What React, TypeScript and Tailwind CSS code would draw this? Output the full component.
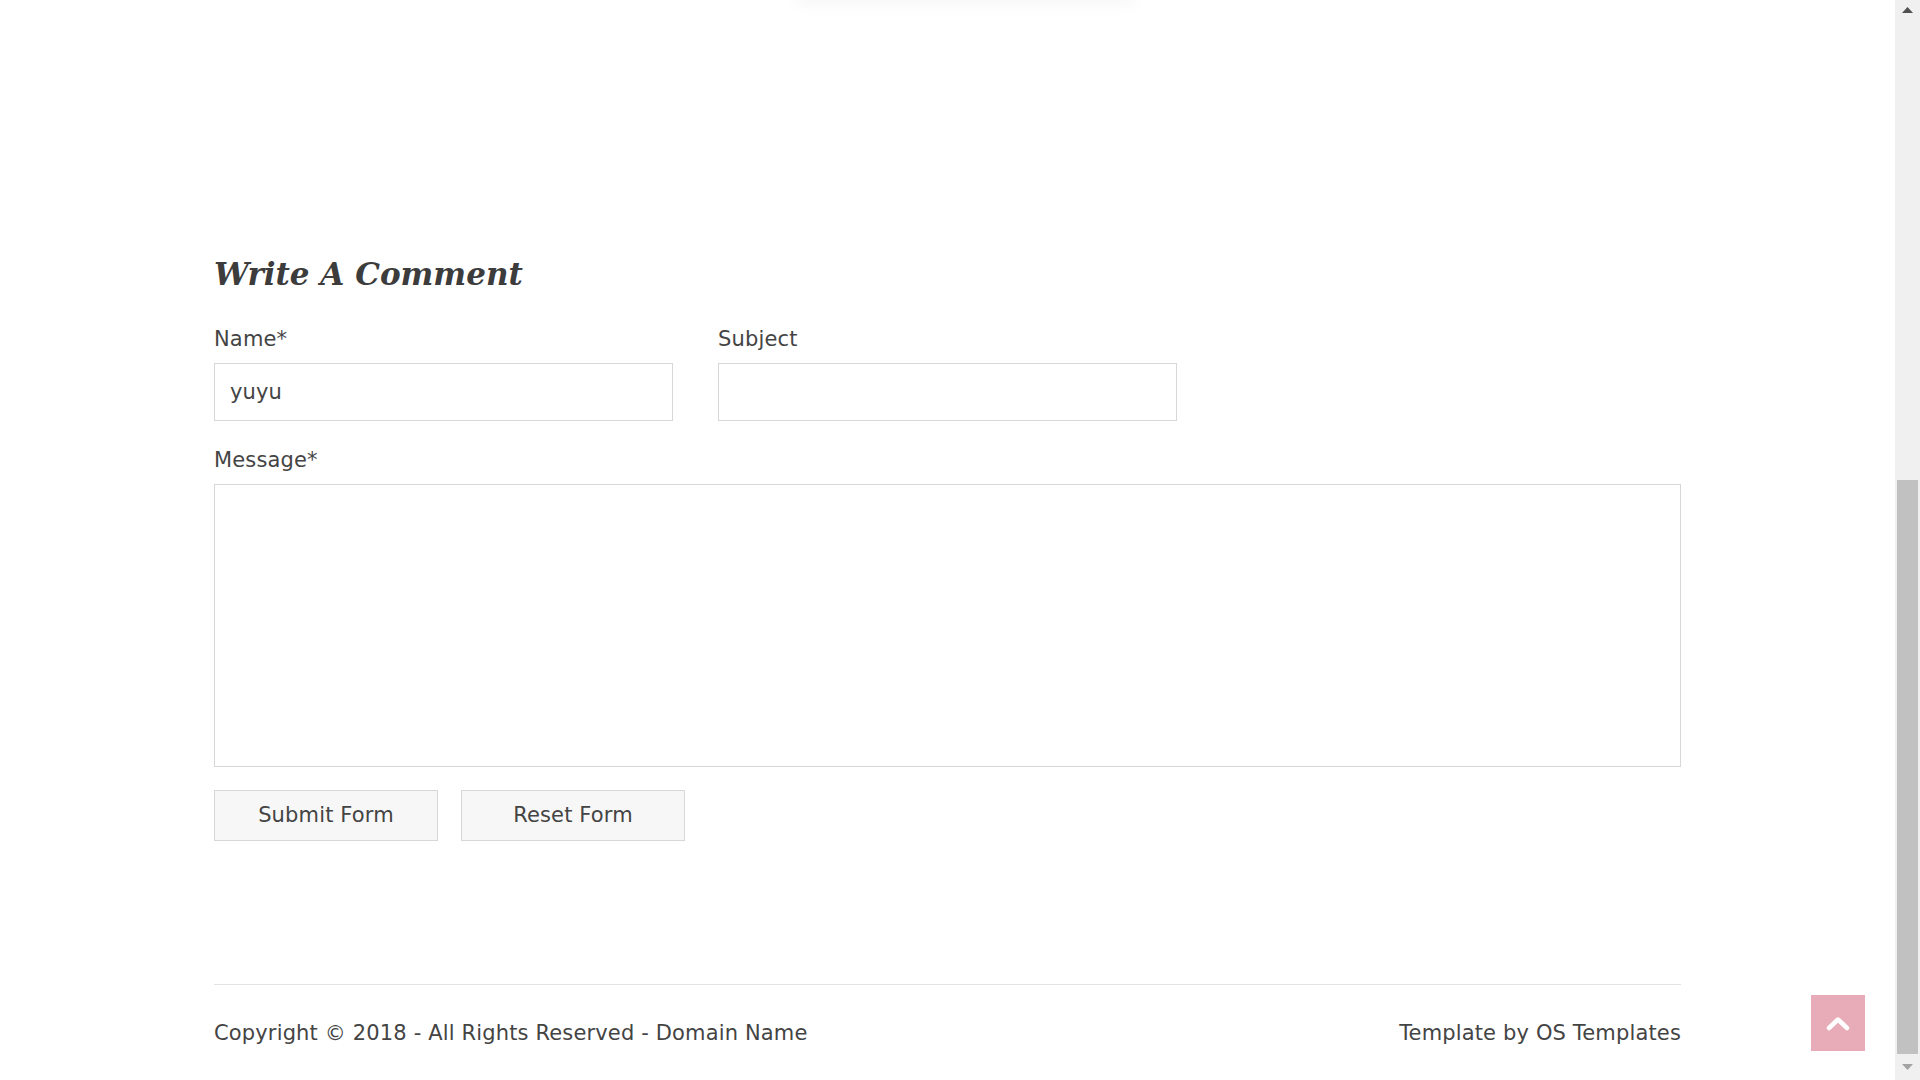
import { useState } from 'react';

function ScrollBar() {
    return (
        <div className="w-[25px] h-full bg-[#f0f0f0] flex flex-col items-center">
            <div className="h-[20px] w-full flex items-center justify-center">
                <svg width="11" height="6" viewBox="0 0 11 6"><polygon points="0,6 5.5,0 11,6" fill="#505050" /></svg>
            </div>
            <div className="h-[460px]" />
            <div className="w-[21px] h-[574px] bg-[#c1c1c1]" />
            <div className="flex-1 w-full flex items-center justify-center">
                <svg width="11" height="6" viewBox="0 0 11 6"><polygon points="0,0 11,0 5.5,6" fill="#a3a3a3" /></svg>
            </div>
        </div>
    );
}

export default function App() {
    const [name, setName] = useState("yuyu");
    const [subject, setSubject] = useState("");
    const [message, setMessage] = useState("");

    const body = "font-['DejaVu_Sans','Verdana',sans-serif] text-[21px] tracking-[0.15px] text-[#444]";

    return (
        <div className={`h-[1080px] w-full flex overflow-hidden bg-white ${body}`}>
            <div className="relative flex-1 flex flex-col">
                {/* faint shadow of the element above */}
                <div className="mx-auto w-[330px] h-0 ml-[800px] shadow-[0_0_14px_4px_rgba(0,0,0,0.05)]" />

                <div className="mx-auto w-[1467px] flex flex-col">
                    <h2 className="mt-[256px] h-[36px] leading-[36px] text-[31px] tracking-normal font-bold italic text-[#3c3c3c] font-['DejaVu_Serif','Georgia',serif]">
                        Write A Comment
                    </h2>

                    <div className="mt-[32px] flex gap-[45px]">
                        <div className="flex flex-col w-[459px]">
                            <label className="leading-[30px] mb-[9px]">Name*</label>
                            <input
                                value={name}
                                onChange={(e) => setName(e.target.value)}
                                className="h-[58px] border border-[#d7d7d7] px-[15px] outline-none text-[#444]"
                            />
                        </div>
                        <div className="flex flex-col w-[459px]">
                            <label className="leading-[30px] mb-[9px]">Subject</label>
                            <input
                                value={subject}
                                onChange={(e) => setSubject(e.target.value)}
                                className="h-[58px] border border-[#d7d7d7] px-[15px] outline-none text-[#444]"
                            />
                        </div>
                    </div>

                    <label className="mt-[24px] leading-[30px] mb-[9px]">Message*</label>
                    <textarea
                        value={message}
                        onChange={(e) => setMessage(e.target.value)}
                        className="h-[283px] border border-[#d7d7d7] px-[15px] py-[10px] outline-none resize-none"
                    />

                    <div className="mt-[23px] flex gap-[23px]">
                        <button className="w-[224px] h-[51px] bg-[#f7f7f7] border border-[#d7d7d7] text-[#444]">
                            Submit Form
                        </button>
                        <button className="w-[224px] h-[51px] bg-[#f7f7f7] border border-[#d7d7d7] text-[#444]">
                            Reset Form
                        </button>
                    </div>

                    <div className="mt-[143px] border-t border-[#e3e3e3] pt-[33px] flex justify-between leading-[30px]">
                        <p>Copyright © 2018 - All Rights Reserved - Domain Name</p>
                        <p>Template by OS Templates</p>
                    </div>
                </div>

                <button className="absolute right-[30px] bottom-[29px] w-[54px] h-[56px] bg-[#e8abb8] flex items-center justify-center">
                    <svg width="24" height="15" viewBox="0 0 24 15">
                        <polyline points="3,12 12,3.5 21,12" fill="none" stroke="#fff" strokeWidth="4.5" strokeLinecap="round" strokeLinejoin="round" />
                    </svg>
                </button>
            </div>
            <ScrollBar />
        </div>
    );
}
